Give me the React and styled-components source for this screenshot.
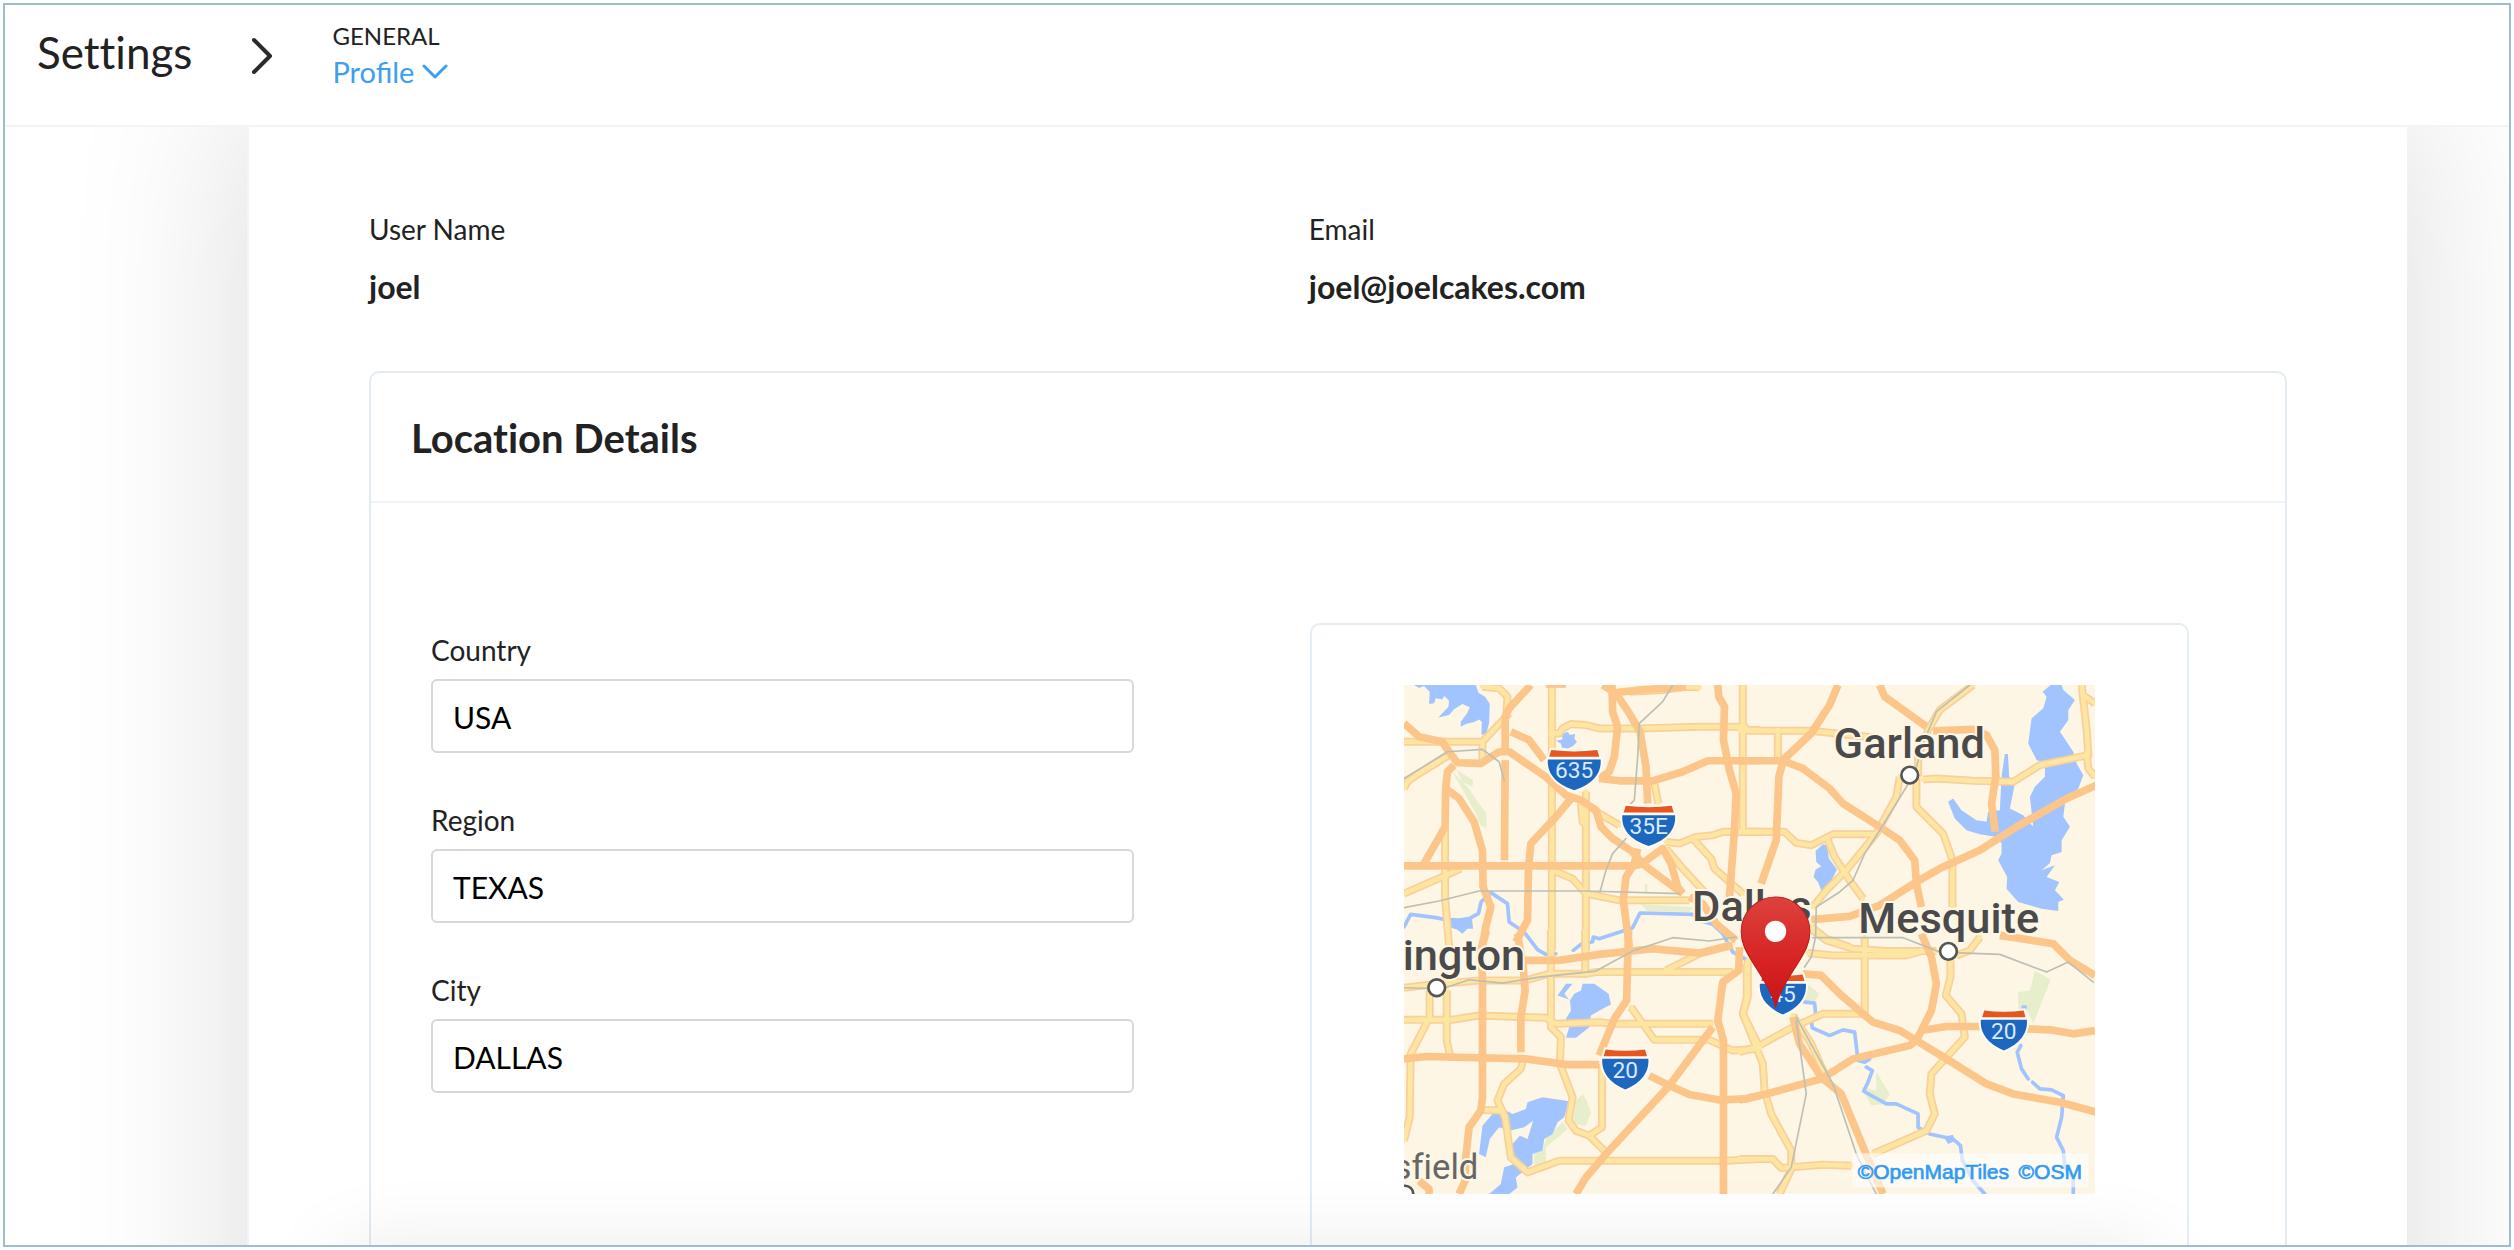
import {useState} from 'react'
import styled, {createGlobalStyle} from "styled-components"

const GlobalStyle = createGlobalStyle`
    * {
    box-sizing: border-box;
    }
    body {
    margin: 0;
    background: #fdfefe;
    color: #222222;
    font-family: Lato, "Open Sans", sans-serif;
    font-variant-ligatures: none;
    }
`

const Shell = styled.div`
    display: flex;
    flex-direction: column;
    height: calc(100vh - 6px);
    margin: 3px;
    border: solid 2px #9fbdca;
    background: white;
    overflow: hidden;
`

const TopBar = styled.header`
    display: flex;
    align-items: flex-start;
    flex: none;
    min-height: 122px;
    padding: 15px 32px;
    border-bottom: solid 2px #eff5f9;
`

const Crumbs = styled.nav`
    display: flex;
    align-items: center;
    gap: 58px;
`

const PageTitle = styled.h1`
    margin: 0;
    padding-bottom: 8px;
    font-size: 44px;
    font-weight: 400;
    line-height: 52px;
`

const CrumbGroup = styled.div`
    display: flex;
    flex-direction: column;
    align-items: flex-start;
`

const CrumbLabel = styled.span`
    font-size: 24px;
    line-height: 32px;
`

const CrumbButton = styled.button`
    display: flex;
    align-items: center;
    gap: 8px;
    padding: 0;
    border: none;
    background: none;
    color: #3c9ff0;
    font-family: inherit;
    font-size: 29px;
    line-height: 40px;
    font-variant-ligatures: normal;
    cursor: pointer;
`

const Main = styled.main`
    position: relative;
    flex: 1;
    min-height: 0;
    overflow: hidden;
`

const Panel = styled.div`
    margin: 0 102px 0 242px;
    padding: 84px 120px 120px;
    border-left: solid 2px #eff5f9;
    background: white;
    box-shadow: 0 -34px 170px rgba(0,0,0,0.14);
`

const SaveBar = styled.div`
    position: absolute;
    top: 100%;
    left: 330px;
    right: 356px;
    height: 100px;
    background: white;
    box-shadow: 0 0 80px rgba(0,0,0,0.08);
    pointer-events: none;
`

const UserInfo = styled.dl`
    display: grid;
    grid-template-columns: 49% 51%;
    margin: 0 0 64px;
`

const InfoItem = styled.div`
    display: flex;
    flex-direction: column;
    gap: 20px;
`

const InfoLabel = styled.dt`
    font-size: 28px;
    line-height: 36px;
`

const InfoValue = styled.dd`
    margin: 0;
    font-size: 32px;
    font-weight: 700;
    line-height: 40px;
`

const Card = styled.section`
    border: solid 2px #e3ebf1;
    border-radius: 10px;
`

const CardTitle = styled.h2`
    margin: 0;
    padding: 41px 40px 39px;
    border-bottom: solid 2px #eff5f9;
    font-size: 40px;
    font-weight: 700;
    line-height: 48px;
`

const CardBody = styled.div`
    display: grid;
    grid-template-columns: 40% 50%;
    justify-content: space-between;
    padding: 120px 96px 120px 60px;
`

const Form = styled.form`
    display: flex;
    flex-direction: column;
    gap: 48px;
    padding-top: 8px;
`

const Field = styled.div`
    display: flex;
    flex-direction: column;
    gap: 10px;
`

const FieldLabel = styled.label`
    font-size: 28px;
    line-height: 38px;
`

const FieldInput = styled.input`
    width: 100%;
    height: 74px;
    padding: 2px 20px 0;
    border: solid 2px #d8d8d8;
    border-radius: 6px;
    outline: none;
    background: white;
    color: black;
    font-family: inherit;
    font-size: 30px;
    &:focus{
    border-color: #3c9ff0;
    }
`

const MapFrame = styled.div`
    padding: 60px 92px 120px;
    border: solid 2px #e4ecf5;
    border-radius: 10px;
`

const MapSvg = styled.svg`
    display: block;
    width: 100%;
    height: auto;
`

const Layer = styled.g`
    fill: none;
    stroke: ${({$color}) => $color};
    stroke-width: ${({$width}) => $width};
    stroke-linejoin: round;
    stroke-linecap: ${({$cap}) => $cap || "round"};
`

const Place = styled.text`
    font-family: Roboto, sans-serif;
    font-size: ${({$small}) => $small ? "104px" : "130px"};
    font-weight: ${({$small}) => $small ? 400 : 500};
    fill: ${({$small}) => $small ? "#666666" : "#4a4a4a"};
    stroke: #fdf6e5;
    stroke-width: 12px;
    stroke-linejoin: round;
    paint-order: stroke;
`

const ShieldText = styled.text`
    font-family: Roboto, sans-serif;
    font-size: 68px;
    fill: #d9ebff;
    text-anchor: middle;
`

const Credit = styled.text`
    font-family: "Liberation Sans", Arial, sans-serif;
    font-size: 63px;
    fill: #2f9bf3;
    stroke: #2f9bf3;
    stroke-width: 2px;
`

const tiles = [
    {
        x: 0,
        y: 0,
        water: [
            "M15 15L45 15L60 24L75 18L92 35L90 72L105 70L110 55L130 58L136 48L150 62L148 80L118 112L150 105L165 88L190 72L212 82L205 98L185 125L185 140L200 132L225 126L240 118L248 125L247 165L262 160L270 128L272 72L258 50L238 38L230 15Z",
            "M505 155L512 165L528 162L525 175L533 185L522 198L505 205L488 202L485 190L470 182L490 178L488 162Z",
            "M133 722L160 712L185 715L218 708L222 745L205 745L190 760L175 748L150 740Z"
        ],
        parks: [
            "M172 268L222 300L220 320L190 305Z",
            "M160 275L205 320L240 370L262 400L262 445L245 435L225 390L200 345Z",
            "M725 672L880 680L870 695L745 692Z",
            "M736 612H744V635H736Z"
        ],
        rivers: [
            "M15 740L35 702L110 712L160 722L210 715L238 700L246 665L275 637L325 670L330 725L375 755L415 808L440 822L470 820",
            "M522 810L545 792L580 784L582 770L600 775L700 742L722 698L880 702L905 722L940 732L970 760L1000 815L1045 840"
        ],
        minor: [
            "M250 20L300 25L325 50L322 100",
            "M458 15V810",
            "M15 185H250L330 100",
            "M250 185V240",
            "M15 325L25 305L60 280L150 225",
            "M455 160H480L490 145L515 132L560 135L600 145L720 145L900 140L1035 140L1045 150H1080",
            "M1030 15V455",
            "M1080 455H970L940 465L890 470L840 490L800 485",
            "M880 475L935 535L945 565L1030 640",
            "M800 505L850 565L920 640",
            "M138 440V650L150 800",
            "M15 640L130 590L185 565",
            "M460 570L520 595L560 640",
            "M560 335V810",
            "M545 370L550 425L560 435",
            "M560 640L660 660L870 660",
            "M575 380L600 400L660 435",
            "M765 310L777 370",
            "M690 35L790 30L860 20L900 22"
        ],
        major: [
            "M15 130L60 170L130 185L150 215L175 248L245 250L300 215L330 215L440 290L500 345L545 360L590 390L605 440L640 475L700 515L735 555L850 640",
            "M395 15L330 85L318 110V215",
            "M318 240L316 540",
            "M165 255L145 275L140 325L180 355L225 425L250 510L252 620L275 680L260 740L248 810",
            "M140 320L138 440L75 550",
            "M15 557H700L735 550",
            "M335 155L390 180L435 240",
            "M520 350L470 410L395 490L388 560L385 720L350 785",
            "M638 15L640 95L655 140L645 230L630 275L600 295",
            "M610 15L650 40L690 100L722 155L740 260L745 370",
            "M650 38L720 30L860 20",
            "M600 295L660 302L760 302L850 275L925 242H1080",
            "M955 15L958 50L975 80L972 180L990 270L1010 340L1005 450L990 650",
            "M735 545L790 505L815 550L835 620L850 640",
            "M715 505L705 550L680 590L672 660L690 800",
            "M440 12H500",
            "M870 650L910 670L950 730L1010 780"
        ],
        rails: [
            "M820 15L790 65L720 130L715 230L705 360L690 375",
            "M15 295L80 255L145 215L250 208L300 245L315 300",
            "M15 682L120 662L240 632H560L840 640",
            "M680 475L640 520L620 570L602 635"
        ]
    },
    {
        x: 1020,
        y: 0,
        water: [
            "M932 15H965L970 30L1005 60L985 90L985 120L960 155L1000 215L1010 250L1030 285L1015 325L975 370L970 410L990 440L965 480L965 515L935 525L930 548L905 570L945 555L920 590L958 605L945 630L972 658L955 665L955 692L905 685L835 665L800 625L802 590L775 540L785 520L785 490L770 470L720 462L680 450L645 415L625 365L640 355L665 390L710 420L740 425L745 395L780 390L785 290L795 222H804L808 290L825 310L810 385L850 405L880 440L870 350L885 320L915 290L915 250L890 240L865 190L875 115L910 85L920 50L908 35Z",
            "M228 512L250 492L262 495L268 535L292 568L270 612L245 630L235 605L222 590L228 568L245 558L230 545Z"
        ],
        parks: [],
        rivers: [],
        minor: [
            "M0 152H215L290 160L400 172",
            "M115 150V240",
            "M700 15L600 90L565 150L535 230V290",
            "M530 290V380L610 460L638 540V680",
            "M480 290L470 350L410 460L320 570L260 630L220 680",
            "M550 298L590 295L700 302L820 305L900 255L1045 225L1040 150L1025 15",
            "M1040 220L1045 265L1065 290",
            "M1035 50L1065 70",
            "M0 455H135L170 488L215 495L280 462H400",
            "M265 480L285 530L330 600L370 655",
            "M215 740L260 775L330 800"
        ],
        major: [
            "M295 15L270 75L215 160L130 240",
            "M0 242H130L190 265L270 325L310 370L420 440L480 480L525 540L530 610L545 680",
            "M130 245L118 290L110 480L65 610",
            "M420 15L435 50L560 140",
            "M580 152L700 148L740 165L765 210L768 290L755 370L766 455",
            "M215 718L330 708L420 675L530 605L600 565L720 510L830 440L980 355L1070 315"
        ],
        rails: [
            "M690 15L590 95L550 190L530 260L500 320L420 450L375 520L340 600L300 635L230 680L228 770L215 830L195 860"
        ]
    },
    {
        x: 0,
        y: 750,
        water: [
            "M500 160H520L495 190L512 210L525 190L545 180L550 160H585L628 190L635 222L610 235L575 255L570 290L530 322L500 322L510 290L500 265L515 240L512 208L475 195Z",
            "M430 500L510 512L495 560L475 575L460 610L435 625L430 660L400 670L400 700L350 740L355 770L330 790H270L305 760L315 710L345 700L340 640L362 615L385 625L402 570L375 590L330 600L300 590L272 625L260 680L240 670L250 585L280 550L320 540L340 550L380 535L385 515Z"
        ],
        parks: [
            "M550 490L562 510L575 545L560 585L520 580L530 510Z",
            "M490 575L505 595L440 650L440 700L405 705L405 670L430 660L440 625Z"
        ],
        rivers: [],
        minor: [
            "M455 0V290L485 320L482 400L520 500L508 570L530 600L570 615L625 670",
            "M608 400V590L570 615",
            "M558 0V120",
            "M450 130H560L590 125H1000",
            "M15 172L100 162L240 150L380 150L450 130",
            "M15 268H160L240 255L440 262L470 280L600 275L640 280H940",
            "M92 180V260L35 370L32 560L15 630",
            "M143 180V330L155 385",
            "M800 120L900 70L990 45",
            "M695 230L765 328H930L1000 360L1080 355",
            "M1045 90V200L1030 250L1080 350",
            "M370 395L365 415L315 460L295 510L318 560L335 680L385 725L480 690H980L1080 685",
            "M245 538L310 540"
        ],
        major: [
            "M262 0L245 60L250 140V500L245 540L210 590L200 680L198 750L180 790",
            "M375 90H480L600 72L760 55L900 68L1000 45",
            "M355 10L372 110L378 180L365 260V365",
            "M15 385L80 378L380 385L500 402L600 402",
            "M688 0L685 90L682 210L645 265L600 375",
            "M750 435L810 465L870 492L960 508L1040 505L1080 495",
            "M1020 50L1018 120L970 155L955 270L972 330V790",
            "M940 290L810 465L620 670L560 740L530 790",
            "M60 750L90 775V790"
        ],
        rails: [
            "M15 172L130 175L210 148L310 158L420 140L590 122L700 62L820 22L930 32L1010 20"
        ]
    },
    {
        x: 1020,
        y: 750,
        water: ["M612 618L640 612L645 632L625 640Z"],
        parks: [
            "M885 120L932 148L880 280L862 240L835 235L835 185L870 180Z",
            "M190 150L240 190L225 215L195 210Z",
            "M365 470L410 480V425L450 490L430 520L395 525Z"
        ],
        rivers: [
            "M195 215L225 218L228 250L215 270L218 292L270 315L310 298L345 305L355 390L375 395L390 385",
            "M380 410L398 420L385 455L372 482L440 520L470 520L535 550L535 590L570 610L640 625L662 645L668 690L700 750L735 790",
            "M843 345L832 365L845 415L865 445",
            "M878 455L900 475L935 478L970 495L965 560L950 620L970 660L975 710L1000 740V790",
            "M850 230H856"
        ],
        minor: [
            "M220 0L260 30L340 55L440 62H590",
            "M205 68L280 75L500 75L560 58",
            "M375 20V250H250L160 290L50 350L0 365",
            "M22 100V200L10 250L50 350L70 400L75 480L95 550L155 660V715L120 790",
            "M160 255L215 340L255 430",
            "M0 685H100L125 712L250 702L335 705",
            "M632 90V140L618 195L665 250L675 320L575 430L570 490L585 550L560 600L400 670",
            "M650 75L690 60L720 20"
        ],
        major: [
            "M190 130L245 135L300 190L370 250L400 275L480 300L530 330L620 385L740 460L820 490L960 515L1070 545",
            "M545 10L575 80L590 160L575 240L530 330",
            "M0 508L80 490L245 445L340 385L510 345L535 325",
            "M545 300L620 288H720",
            "M860 295L930 298L1000 310L1065 300",
            "M160 260L180 340L245 440L305 490L375 660L430 790",
            "M780 15L940 40L990 90L1065 135"
        ],
        rails: [
            "M220 22H490L600 65L780 72L920 125L985 95L1060 155",
            "M170 270L200 490L155 710L100 790",
            "M170 260L280 460L350 670L410 790"
        ]
    }
]

const shields = [
    {x: 525, y: 208, width: 158, name: "635"},
    {x: 748, y: 375, width: 158, name: "35E"},
    {x: 678, y: 1105, width: 138, name: "20"},
    {x: 1150, y: 880, width: 138, name: "45"},
    {x: 1812, y: 988, width: 138, name: "20"}
]

const towns = [
    {x: 1530, y: 285},
    {x: 1646, y: 813},
    {x: 113, y: 922},
    {x: 18, y: 1540}
]

const TileLayer = ({name, ...rest}) => (
    <Layer {...rest}>
        {tiles.map((tile) => (
            <g key={`${tile.x}-${tile.y}`} transform={`translate(${tile.x} ${tile.y})`}>
                {tile[name].map((d) => <path key={d} d={d}/>)}
            </g>
        ))}
    </Layer>
)

const TileFill = ({name, color}) => (
    <g fill={color}>
        {tiles.map((tile) => (
            <g key={`${tile.x}-${tile.y}`} transform={`translate(${tile.x} ${tile.y})`}>
                {tile[name].map((d) => <path key={d} d={d}/>)}
            </g>
        ))}
    </g>
)

const Shield = ({x, y, width, name}) => {
    const half = width / 2
    const body = `M${-half} 30H${half}C${half + 4} 80 ${half - 35} 108 0 122C${35 - half} 108 ${-half - 4} 80 ${-half} 30Z`
    const cap = `M${10 - half} 2Q0 10 ${half - 10} 2L${half - 4} 22H${4 - half}Z`

    return (
        <g transform={`translate(${x} ${y})`}>
            <path d={body} fill="#fdfaf3" stroke="#fdfaf3" strokeWidth="12"/>
            <path d={cap} fill="#fdfaf3" stroke="#fdfaf3" strokeWidth="12"/>
            <path d={body} fill="#1d67bf"/>
            <path d={cap} fill="#e8561f"/>
            <ShieldText y="86">{name}</ShieldText>
        </g>
    )
}

const LocationMap = () => (
    <MapSvg viewBox="15 15 2070 1524" role="img" aria-label="Map of Dallas">
        <defs>
            <linearGradient id="pin" x1="0" y1="0" x2="0" y2="1">
                <stop offset="0" stopColor="#dd423d"/>
                <stop offset="0.6" stopColor="#d62222"/>
                <stop offset="1" stopColor="#c91414"/>
            </linearGradient>
        </defs>
        <rect x="15" y="15" width="2070" height="1524" fill="#fdf6e5"/>
        <TileFill name="parks" color="#e6eecb"/>
        <TileFill name="water" color="#a1c3fe"/>
        <TileLayer name="rivers" $color="#a1c3fe" $width="11"/>
        <TileLayer name="minor" $color="#f9cf9a" $width="24" $cap="butt"/>
        <TileLayer name="minor" $color="#fde5a2" $width="14"/>
        <TileLayer name="major" $color="#fcc68a" $width="23" $cap="butt"/>
        <TileLayer name="rails" $color="#bdbfb4" $width="5"/>

        <Place x="1302" y="235">Garland</Place>
        <Place x="878" y="722">Dallas</Place>
        <Place x="1376" y="758">Mesquite</Place>
        <Place x="378" y="868" textAnchor="end">ington</Place>
        <Place x="238" y="1495" textAnchor="end" $small>sfield</Place>
        {towns.map(({x, y}) => (
            <circle key={x} cx={x} cy={y} r="25" fill="white" stroke="#555555" strokeWidth="8"/>
        ))}
        {shields.map((shield) => <Shield key={shield.x} {...shield}/>)}

        <path
            d="M1128 982C1120 940 1090 895 1062 850C1040 815 1025 790 1025 753A103 103 0 0 1 1231 753C1231 790 1216 815 1194 850C1166 895 1136 940 1128 982Z"
            fill="url(#pin)"
            stroke="#b81c1c"
            strokeWidth="3"
        />
        <circle cx="1128" cy="753" r="32" fill="white"/>

        <rect x="1358" y="1418" width="707" height="102" fill="white" fillOpacity="0.6"/>
        <a href="https://openmaptiles.org/">
            <Credit x="1374" y="1496">©OpenMapTiles</Credit>
        </a>
        <a href="https://www.openstreetmap.org/copyright">
            <Credit x="2046" y="1496" textAnchor="end">©OSM</Credit>
        </a>
    </MapSvg>
)

const fields = [
    {id: "country", label: "Country"},
    {id: "region", label: "Region"},
    {id: "city", label: "City"}
]

const App = () => {
    const [location, setLocation] = useState({
        country: "USA",
        region: "TEXAS",
        city: "DALLAS"
    })

    const changeHandler = (e) => {
        setLocation({...location, [e.target.id]: e.target.value})
    }

  return (
      <>
      <GlobalStyle/>
      <Shell>
          <TopBar>
              <Crumbs aria-label="Breadcrumb">
                  <PageTitle>Settings</PageTitle>
                  <svg width="24" height="38" viewBox="0 0 24 38" aria-hidden="true">
                      <path d="M4 3L20 19L4 35" fill="none" stroke="#2b2b2b" strokeWidth="4" strokeLinecap="round" strokeLinejoin="round"/>
                  </svg>
                  <CrumbGroup>
                      <CrumbLabel>GENERAL</CrumbLabel>
                      <CrumbButton type="button">
                          Profile
                          <svg width="26" height="16" viewBox="0 0 26 16" aria-hidden="true">
                              <path d="M2 2L13 13L24 2" fill="none" stroke="currentColor" strokeWidth="3" strokeLinecap="round" strokeLinejoin="round"/>
                          </svg>
                      </CrumbButton>
                  </CrumbGroup>
              </Crumbs>
          </TopBar>

          <Main>
              <Panel>
                  <UserInfo>
                      <InfoItem>
                          <InfoLabel>User Name</InfoLabel>
                          <InfoValue>joel</InfoValue>
                      </InfoItem>
                      <InfoItem>
                          <InfoLabel>Email</InfoLabel>
                          <InfoValue>joel@joelcakes.com</InfoValue>
                      </InfoItem>
                  </UserInfo>

                  <Card>
                      <CardTitle>Location Details</CardTitle>
                      <CardBody>
                          <Form>
                              {fields.map(({id, label}) => (
                                  <Field key={id}>
                                      <FieldLabel htmlFor={id}>{label}</FieldLabel>
                                      <FieldInput id={id} type="text" value={location[id]} onChange={changeHandler}/>
                                  </Field>
                              ))}
                          </Form>
                          <MapFrame>
                              <LocationMap/>
                          </MapFrame>
                      </CardBody>
                  </Card>
              </Panel>
              <SaveBar/>
          </Main>
      </Shell>
      </>
  )
}

export default App
